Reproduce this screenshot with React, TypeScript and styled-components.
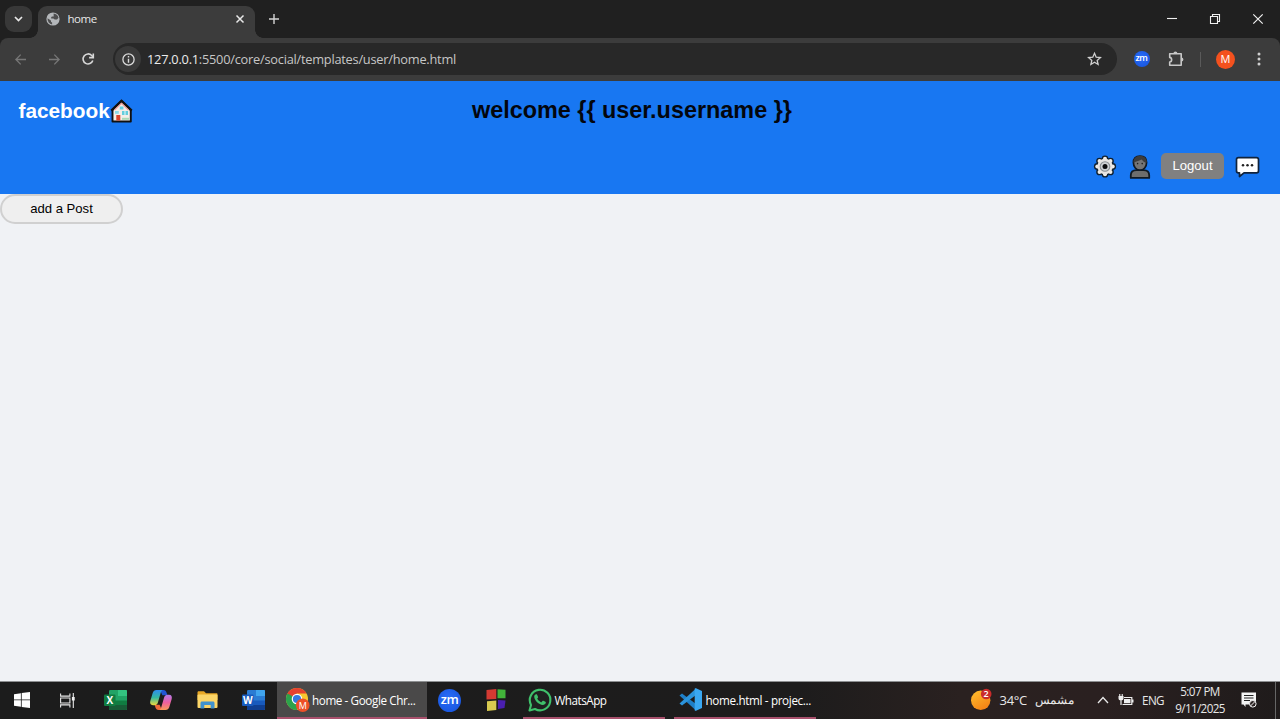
import React from "react";
import styled, { createGlobalStyle } from "styled-components";

const GlobalStyle = createGlobalStyle`
  * { box-sizing: border-box; }
  html, body { margin: 0; padding: 0; }
  body { overflow: hidden; }
  svg { display: block; flex: none; overflow: visible; }
  button { font: inherit; margin: 0; padding: 0; border: 0; background: none; color: inherit; }
`;

const ui = `"Open Sans", "Noto Sans", sans-serif`;
const arial = `"Liberation Sans", Arial, sans-serif`;

const Screen = styled.div`
  width: 1280px;
  height: 719px;
  overflow: hidden;
  display: flex;
  flex-direction: column;
  background: #f0f2f5;
`;

const Text = styled.span<{ $size: number; $spacing?: number; $color?: string }>`
  font-family: ${ui};
  font-size: ${(p) => p.$size}px;
  letter-spacing: ${(p) => p.$spacing ?? 0}px;
  color: ${(p) => p.$color ?? "#e8e8e8"};
  white-space: pre;
  line-height: 16px;
`;

/* Browser frame */
const TabStrip = styled.div`
  height: 38px;
  flex: none;
  background: #202020;
  display: flex;
  align-items: flex-start;
  padding: 6px 1px 0 5px;
`;

const TabSearch = styled.button`
  width: 27px;
  height: 26px;
  border-radius: 9px;
  background: #383838;
  display: grid;
  place-items: center;
  margin-right: 6px;
`;

const Tab = styled.div`
  position: relative;
  width: 217px;
  height: 32px;
  border-radius: 9px 9px 0 0;
  background: #3c3c3c;
  display: flex;
  align-items: center;
  padding: 0 8px 6px 8px;
  &::before, &::after {
    content: "";
    position: absolute;
    bottom: 0;
    width: 8px;
    height: 8px;
  }
  &::before {
    left: -8px;
    background: radial-gradient(circle at 0 0, transparent 7.5px, #3c3c3c 8px);
  }
  &::after {
    right: -8px;
    background: radial-gradient(circle at 100% 0, transparent 7.5px, #3c3c3c 8px);
  }
`;

const TabTitle = styled(Text)`
  flex: 1;
  margin-left: 7.5px;
`;

const Slot = styled.div<{ $w: number }>`
  width: ${(p) => p.$w}px;
  height: 26px;
  flex: none;
  display: grid;
  place-items: center;
`;

const Spacer = styled.div`
  flex: 1;
`;

const ToolbarBack = styled.div`
  flex: none;
  height: 43px;
  background: #202020;
`;

const Toolbar = styled.div`
  height: 43px;
  background: #3c3c3c;
  border-radius: 8px 8px 0 0;
  display: flex;
  align-items: center;
  padding: 0 0 1px 4px;
`;

const Omnibox = styled.div`
  width: 1004px;
  height: 32px;
  flex: none;
  margin-left: 8px;
  border-radius: 16px;
  background: #282828;
  display: flex;
  align-items: center;
  padding: 0 10px 0 2px;
`;

const SiteInfo = styled.div`
  width: 26px;
  height: 26px;
  border-radius: 13px;
  background: #3a3a3a;
  display: grid;
  place-items: center;
  margin-right: 6px;
`;

const Divider = styled.div`
  width: 1.5px;
  height: 15px;
  background: #5a5a5a;
`;

const Avatar = styled.div`
  width: 19px;
  height: 19px;
  border-radius: 50%;
  background: #f4511e;
  display: grid;
  place-items: center;
`;

const ZoomDisc = styled.div<{ $d: number }>`
  width: ${(p) => p.$d}px;
  height: ${(p) => p.$d}px;
  border-radius: 50%;
  background: radial-gradient(circle at 45% 40%, #2a6df8, #1350d8);
  color: #fff;
  font: 600 ${(p) => p.$d * 0.56}px/1 ${ui};
  letter-spacing: -0.4px;
  display: flex;
  align-items: center;
  justify-content: center;
  padding-bottom: ${(p) => p.$d * 0.05}px;
`;

/* Web page */
const Header = styled.header`
  height: 113px;
  flex: none;
  background: #1877f2;
  padding: 14px 20px 0 18px;
  font-family: ${arial};
`;

const HeaderTop = styled.div`
  display: grid;
  grid-template-columns: 454px 1fr;
  height: 57px;
`;

const Brand = styled.div`
  height: 32px;
  display: flex;
  align-items: center;
  padding-left: 0.5px;
  color: #fff;
  font-weight: 700;
  font-size: 20.8px;
`;

const Welcome = styled.h1`
  margin: 0;
  font-size: 23.4px;
  line-height: 30px;
  font-weight: 700;
  color: #03060d;
  white-space: pre;
`;

const Actions = styled.nav`
  display: flex;
  justify-content: flex-end;
  align-items: center;
  height: 28px;
`;

const Logout = styled.button`
  width: 63px;
  height: 26px;
  border-radius: 5px;
  background: #808080;
  color: #fff;
  font: 13.1px ${arial};
  padding-bottom: 1px;
  margin: 0 11px 0 10px;
`;

const Feed = styled.main`
  flex: 1;
`;

const AddPost = styled.button`
  width: 123px;
  height: 29.5px;
  border: 2px solid #d0d0d0;
  border-radius: 15px;
  background: #efefef;
  color: #000;
  font: 13.1px ${arial};
  display: block;
`;

/* Taskbar */
const Taskbar = styled.footer`
  height: 38px;
  flex: none;
  border-top: 1px solid #8d8f91;
  background: linear-gradient(90deg, #1c1c1c 0, #1d1c1c 800px, #2a2120 960px, #2a2020 1100px, #1f1b1b 1280px);
  display: flex;
  align-items: stretch;
`;

const TaskIcon = styled.div<{ $w: number }>`
  width: ${(p) => p.$w}px;
  flex: none;
  display: grid;
  place-items: center;
  padding-bottom: 1px;
`;

const TaskWindow = styled.div<{ $w: number; $active?: boolean; $gap?: number }>`
  width: ${(p) => p.$w}px;
  margin-left: ${(p) => p.$gap ?? 0}px;
  flex: none;
  display: flex;
  align-items: center;
  gap: 2.5px;
  padding-left: ${(p) => (p.$active ? 9 : 5)}px;
  background: ${(p) => (p.$active ? "#4a4949" : "transparent")};
  border-bottom: 2px solid #a8506c;
`;

const Tray = styled.div`
  flex: 1;
  display: flex;
  align-items: center;
  justify-content: flex-end;
  padding-bottom: 1px;
`;

const Temperature = styled(Text)`
  margin: 0 8px 0 8px;
`;

const Clock = styled.div`
  width: 56px;
  display: flex;
  flex-direction: column;
  align-items: center;
  gap: 1px;
  margin: 0 13px 0 8px;
  padding-bottom: 2px;
`;

const ShowDesktop = styled.div`
  width: 5px;
  height: 37px;
  margin-left: 18px;
  border-left: 1px solid #666;
`;

const TrayChevron = styled.svg`
  margin: 0 9px 0 23px;
`;

const Battery = styled.svg`
  margin-right: 8px;
`;

const TabClose = styled.svg`
  margin-right: 3px;
`;

const Star = styled.svg`
  margin-right: 5px;
`;

const GearSlot = styled.div`
  margin-right: 12.5px;
`;

const line = (color: string, w = 1.5) => ({
  fill: "none",
  stroke: color,
  strokeWidth: w,
});

const Globe = () => (
  <svg width="14" height="14" viewBox="0 0 14 14">
    <circle cx="7" cy="7" r="6.6" fill="#b4b7ba" />
    <path d="M1.5 6.2l3.4 2.2.2 1.6 1 .6v2C3.4 12 1.4 9.6 1.5 6.2zM7.6 1.5c2.5.2 4.3 1.8 4.9 4.2L11 7.6H8.7L7.4 6.4H5.2V5l1-.6h1.5z" fill="#3c3c3c" opacity=".85" />
  </svg>
);

const House = () => (
  <svg width="23" height="24" viewBox="0 0 23 24">
    <path d="M11.5 2L20.8 11V22.5H2.5V11z" fill="#f3eee9" stroke="#101010" strokeWidth="1.9" strokeLinejoin="round" />
    <path d="M1.3 11.7L11.5 1.8l10.2 9.9" {...line("#111", 2.3)} />
    <path d="M4.5 11L11.5 4.3l7 6.7" {...line("#ef9d97", 1.1)} />
    <rect x="9.8" y="7.5" width="3.6" height="3" fill="#68d0df" />
    <rect x="5" y="12" width="3.8" height="2.8" fill="#8adbe6" />
    <rect x="12" y="12" width="6" height="4" fill="#63cddd" />
    <path d="M15 12v4" {...line("#eaf7f9", 1)} />
    <rect x="6.3" y="16" width="4" height="5.5" fill="#d8442c" />
    <path d="M12 19.8h7" {...line("#a9d8b5", 2)} />
  </svg>
);

const gearTeeth = Array.from({ length: 8 }, (_, i) => {
  const a = (i * Math.PI) / 4;
  return { x: 12 + 7.7 * Math.cos(a), y: 12.5 + 7.7 * Math.sin(a) };
});

const Gear = () => (
  <svg width="24" height="24" viewBox="0 0 24 24">
    {gearTeeth.map((t, i) => <circle key={i} cx={t.x} cy={t.y} r="3.4" fill="#10202f" />)}
    {gearTeeth.map((t, i) => <circle key={i} cx={t.x} cy={t.y} r="2" fill="#efece8" />)}
    <circle cx="12" cy="12.5" r="7.7" fill="#e9e6e3" />
    <circle cx="12" cy="12.5" r="4.8" fill="#d0d2d4" stroke="#8c9093" strokeWidth="1.1" />
    <circle cx="12" cy="12.5" r="2.5" fill="#0c0c0c" />
  </svg>
);

const Person = () => (
  <svg width="22" height="25" viewBox="0 0 22 25">
    <path d="M1.8 23.9v-2.6c0-3.5 2.2-5.200 5.700-5.200h7c3.500 0 5.700 1.700 5.700 5.200v2.600z" fill="#6d6d6d" stroke="#111a24" strokeWidth="1.8" strokeLinejoin="round" />
    <path d="M11 2c4.500 0 6.600 2.800 6.600 6.600 0 4.200-2.800 7.600-6.600 7.600s-6.600-3.400-6.600-7.600C4.400 4.800 6.500 2 11 2z" fill="#747474" stroke="#111a24" strokeWidth="1.7" />
    <path d="M4.5 8.800C4 4.800 7 1.800 11 1.800s7 2.500 6.800 7c-2.300 0-4-1.800-5.300-3.200-1.800 1.200-5 2-8 3.200z" fill="#3c3c3c" />
    <circle cx="8.6" cy="9.600" r=".8" fill="#222" />
    <circle cx="13.2" cy="9.600" r=".8" fill="#222" />
  </svg>
);

const Chat = () => (
  <svg width="25" height="22" viewBox="0 0 25 22">
    <path d="M3.5 2.7h18c1.200 0 2 .8 2 1.800V16c0 1-.8 1.800-2 1.800H9L4.500 21.500v-3.700h-1c-1.200 0-2-.8-2-1.800V4.500c0-1 .8-1.800 2-1.800z" fill="#fff" stroke="#10233c" strokeWidth="1.7" strokeLinejoin="round" />
    {[8, 12.5, 17].map((x) => <circle key={x} cx={x} cy="10.200" r="1.250" fill="#222" />)}
  </svg>
);

const OfficeIcon = ({ letter, tones }: { letter: string; tones: string[] }) => (
  <svg width="23" height="21" viewBox="0 0 23 21">
    <rect x="5" y="0" width="18" height="20" rx="1.3" fill={tones[1]} />
    <path d="M14 0h7.7A1.3 1.3 0 0 1 23 1.3V6h-9z" fill={tones[0]} />
    <path d="M5 10.5h18V15H5z" fill={tones[2]} />
    <path d="M5 15h18v3.7a1.3 1.3 0 0 1-1.3 1.3H6.3A1.3 1.3 0 0 1 5 18.700z" fill={tones[3]} />
    <rect x="0" y="4.5" width="11.5" height="11.5" rx="1" fill={tones[4]} />
    <text x="5.75" y="13.8" textAnchor="middle" fontFamily="Open Sans, sans-serif" fontWeight="700" fontSize="10" fill="#fff">{letter}</text>
  </svg>
);

const Copilot = () => (
  <svg width="22" height="20" viewBox="0 0 22 20">
    <defs>
      <linearGradient id="cpA" x1="0" y1="0" x2="0" y2="1">
        <stop offset="0" stopColor="#2d8cf0" />
        <stop offset=".5" stopColor="#34b8a0" />
        <stop offset="1" stopColor="#f0d93c" />
      </linearGradient>
      <linearGradient id="cpB" x1="0" y1="0" x2="0" y2="1">
        <stop offset="0" stopColor="#b57bea" />
        <stop offset=".5" stopColor="#ec5f9f" />
        <stop offset="1" stopColor="#f79a57" />
      </linearGradient>
    </defs>
    <path d="M10 0h3.5c1.7 0 2.5 1 3 2.5l.9 2.8h-5z" fill="#2356d4" />
    <path d="M12 20H8.5c-1.7 0-2.5-1-3-2.5l-.9-2.8h5z" fill="#ee6a3a" />
    <path d="M6.5 0h6.2c-1 .5-1.5 1.3-1.9 2.5L7.9 12.5c-.6 1.900-1.700 2.700-3.400 2.700H3c-2.500 0-3.300-2-2.700-4.200l2.400-8C3.300 1 4.500 0 6.500 0z" fill="url(#cpA)" />
    <path d="M15.500 20H9.300c1-.5 1.500-1.300 1.900-2.500l2.900-10c.6-1.900 1.700-2.700 3.400-2.700H19c2.500 0 3.300 2 2.700 4.200l-2.400 8c-.6 2-1.800 3-3.800 3z" fill="url(#cpB)" />
  </svg>
);

const Folder = () => (
  <svg width="21" height="18" viewBox="0 0 21 18">
    <path d="M.5 1.5C.5.7 1 .3 1.7.3H7l2 2h10.500c.6 0 1 .4 1 1V9H.5z" fill="#e9a825" />
    <rect x=".5" y="3.5" width="20" height="13.5" rx="1" fill="#fbd568" />
    <path d="M3.500 17.500V12c0-1 .6-1.600 1.600-1.600h10.800c1 0 1.600.6 1.600 1.600v5.500h-3.800V14H7.300v3.500z" fill="#3f92cf" />
  </svg>
);

const Chrome = () => (
  <svg width="24" height="24" viewBox="0 0 24 24">
    <circle cx="11" cy="11" r="11" fill="#f9c62f" />
    <path d="M1.47 5.5A11 11 0 0 0 11 22L15.5 13.5L11 11z" fill="#2ba24c" />
    <path d="M1.47 5.5A11 11 0 0 1 20.53 5.5H11z" fill="#e5412f" />
    <path d="M1.47 5.5L6 13l5-2V5.5z" fill="#2ba24c" />
    <path d="M1.47 5.5A11 11 0 0 1 4 2.5L11 5.500l-4 3z" fill="#e5412f" />
    <circle cx="11" cy="11" r="5.3" fill="#fff" />
    <circle cx="11" cy="11" r="4.1" fill="#3478e0" />
    <circle cx="16.7" cy="17.2" r="6.8" fill="#ee4f27" />
    <text x="16.7" y="20.6" textAnchor="middle" fontFamily="Open Sans, sans-serif" fontSize="9" fill="#fff">M</text>
  </svg>
);

const Cubes = () => (
  <svg width="20" height="22" viewBox="0 0 20 22">
    <path d="M.5 1l9.8-1v10l-9.8.5z" fill="#d43a32" />
    <path d="M11.5.3l8 .5v8.500h-8z" fill="#42b43a" />
    <path d="M1 12.300l9.300-.8V21L1 22z" fill="#d9cb50" />
    <path d="M12 11l7.500.5-1 7.500-6.500 1z" fill="#4a1fb0" />
  </svg>
);

const WhatsApp = () => (
  <svg width="24" height="24" viewBox="0 0 24 24">
    <path d="M1.5 22.5l1.5-5.6A10.3 10.3 0 1 1 7 21z" fill="#1f2220" stroke="#3fc16b" strokeWidth="2.1" strokeLinejoin="round" />
    <path d="M8.3 6.3c.4 0 .7.1.9.6l.9 2c.1.400 0 .7-.9 1.700.8 1.700 2.200 3 4 3.800l1.300-1.500c.3-.3.500-.3.900-.1l2 1c.5.200.5.500.4 1-.3 1.300-1.600 2.200-3 2.200-4-.3-8.300-4.500-8.600-8.200 0-1.200.9-2.500 2.100-2.500z" fill="#3fc16b" />
  </svg>
);

const VSCode = () => (
  <svg width="24" height="23" viewBox="0 0 24 23">
    <path d="M.5 7.4l2.5-2L17 16v6.5z" fill="#1e7fc8" />
    <path d="M.5 15.6l2.5 2L17 7V.5z" fill="#2b94dc" />
    <path d="M17 .3l6 2.7v17l-6 2.7c-1 .2-1.3-.5-1.3-.5V.8s.3-.7 1.300-.5z" fill="#3aa8f2" />
  </svg>
);

const Weather = () => (
  <svg width="21" height="22" viewBox="0 0 21 22">
    <defs>
      <linearGradient id="sun" x1="0" y1="0" x2=".6" y2="1">
        <stop offset="0" stopColor="#ffc02e" />
        <stop offset="1" stopColor="#f58416" />
      </linearGradient>
    </defs>
    <circle cx="9.7" cy="11.3" r="9.7" fill="url(#sun)" />
    <circle cx="15.2" cy="5" r="5.3" fill="#c92b2b" />
    <text x="15.2" y="8.2" textAnchor="middle" fontFamily="Open Sans, sans-serif" fontWeight="600" fontSize="9" fill="#fff">2</text>
  </svg>
);

export default function App() {
  return (
    <Screen>
      <GlobalStyle />
      <TabStrip>
        <TabSearch>
          <svg width="9" height="6" viewBox="0 0 9 6"><path d="M1 1l3.5 3.5L8 1" {...line("#e8e8e8", 1.7)} /></svg>
        </TabSearch>
        <Tab>
          <Globe />
          <TabTitle $size={11.5} $spacing={-0.45}>home</TabTitle>
          <TabClose width="8" height="8" viewBox="0 0 8 8"><path d="M.5.5l7 7M7.5.5l-7 7" {...line("#e8e8e8", 1.5)} /></TabClose>
        </Tab>
        <Slot $w={37}>
          <svg width="10" height="10" viewBox="0 0 10 10"><path d="M5 0v10M0 5h10" {...line("#d4d4d4", 1.4)} /></svg>
        </Slot>
        <Spacer />
        <Slot $w={43}>
          <svg width="10" height="2" viewBox="0 0 10 2"><path d="M0 .5h10" {...line("#f0f0f0", 1.1)} /></svg>
        </Slot>
        <Slot $w={43}>
          <svg width="10" height="10" viewBox="0 0 10 10"><path d="M.5 2.5h7v7h-7zM2.5 2.5v-2h7v7h-2" {...line("#f0f0f0", 1.1)} /></svg>
        </Slot>
        <Slot $w={43}>
          <svg width="10" height="10" viewBox="0 0 10 10"><path d="M.3.3l9.400 9.400M9.700.3L.3 9.700" {...line("#f0f0f0", 1.2)} /></svg>
        </Slot>
      </TabStrip>
      <ToolbarBack>
        <Toolbar>
          <Slot $w={33}>
            <svg width="11" height="11" viewBox="0 0 11 11"><path d="M11 5.5H1M5.7.6L.9 5.500l4.800 4.900" {...line("#777", 1.3)} /></svg>
          </Slot>
          <Slot $w={34}>
            <svg width="11" height="11" viewBox="0 0 11 11"><path d="M0 5.5h10M5.3.6l4.800 4.900-4.800 4.900" {...line("#777", 1.3)} /></svg>
          </Slot>
          <Slot $w={34}>
            <svg width="12" height="12" viewBox="0 0 12 12">
              <path d="M10.8 7.500A5 5 0 1 1 9.700 2.500L11 3.900" {...line("#d8d8d8", 1.6)} />
              <path d="M11.3.4v4.200H7.100" {...line("#d8d8d8", 1.6)} />
            </svg>
          </Slot>
          <Omnibox>
            <SiteInfo>
              <svg width="13" height="13" viewBox="0 0 13 13">
                <circle cx="6.5" cy="6.5" r="5.6" {...line("#dcdcdc", 1.3)} />
                <path d="M6.5 5.700v4M6.500 3.100v1.500" {...line("#dcdcdc", 1.4)} />
              </svg>
            </SiteInfo>
            <Text $size={12.8} $spacing={-0.24} $color="#ececec">127.0.0.1</Text>
            <Text $size={12.8} $spacing={-0.24} $color="#c6c6c6">:5500/core/social/templates/user/home.html</Text>
            <Spacer />
            <Star width="15" height="14" viewBox="0 0 15 14">
              <path d="M7.5 1.300l1.700 3.900 4.200.4-3.200 2.800.9 4.100-3.600-2.200-3.600 2.200.9-4.100L1.600 5.600l4.200-.4z" {...line("#d0d0d0", 1.3)} />
            </Star>
          </Omnibox>
          <Slot $w={49}><ZoomDisc $d={16}>zm</ZoomDisc></Slot>
          <Slot $w={19}>
            <svg width="16" height="16" viewBox="0 0 16 16">
              <path d="M1.7 2.8h11.500v11.500H1.700v-3.200c2.600-.4 2.600-4.300 0-4.700z" {...line("#c8c8c8", 1.6)} strokeLinejoin="round" />
              <path d="M5.4 2.500a2 2 0 0 1 4 0zM13.400 6.500a2 2 0 0 1 0 4z" fill="#c8c8c8" />
            </svg>
          </Slot>
          <Slot $w={31}><Divider /></Slot>
          <Slot $w={19}>
            <Avatar><Text $size={11} $color="#fff">M</Text></Avatar>
          </Slot>
          <Slot $w={48}>
            <svg width="4" height="14" viewBox="0 0 4 14">
              {[2, 7, 12].map((y) => <circle key={y} cx="2" cy={y} r="1.5" fill="#d0d0d0" />)}
            </svg>
          </Slot>
        </Toolbar>
      </ToolbarBack>

      <Header>
        <HeaderTop>
          <Brand>facebook<House /></Brand>
          <Welcome>{"welcome {{ user.username }}"}</Welcome>
        </HeaderTop>
        <Actions>
          <GearSlot><Gear /></GearSlot>
          <Person />
          <Logout>Logout</Logout>
          <Chat />
        </Actions>
      </Header>
      <Feed>
        <AddPost>add a Post</AddPost>
      </Feed>

      <Taskbar>
        <TaskIcon $w={44}>
          <svg width="16" height="16" viewBox="0 0 16 16">
            <path d="M0 2.2L6.9 1.2v6.300H0zM7.700 1.100L16 0v7.500H7.700zM0 8.300h6.900v6.400L0 13.700zM7.700 8.300H16V16l-8.300-1.100z" fill="#fff" />
          </svg>
        </TaskIcon>
        <TaskIcon $w={46}>
          <svg width="15" height="15" viewBox="0 0 15 15">
            <path d="M.6.5v2.600h9.300V.5M.6 14.500v-2.600h9.300v2.600M.6 5h9.300v5H.6zM13.300 0v15" {...line("#e8e8e8", 1.1)} />
            <rect x="11.9" y="4" width="2.8" height="3.5" fill="#f0f0f0" />
          </svg>
        </TaskIcon>
        <TaskIcon $w={50}><OfficeIcon letter="X" tones={["#33c481", "#21a366", "#107c41", "#185c37", "#107c41"]} /></TaskIcon>
        <TaskIcon $w={42}><Copilot /></TaskIcon>
        <TaskIcon $w={50}><Folder /></TaskIcon>
        <TaskIcon $w={42}><OfficeIcon letter="W" tones={["#41a5ee", "#2b7cd3", "#185abd", "#103f91", "#185abd"]} /></TaskIcon>
        <TaskWindow $w={150} $active $gap={2.5}>
          <Chrome />
          <Text $size={11.7} $spacing={-0.4} $color="#fff">home - Google Chr...</Text>
        </TaskWindow>
        <TaskIcon $w={46}><ZoomDisc $d={23}>zm</ZoomDisc></TaskIcon>
        <TaskIcon $w={46}><Cubes /></TaskIcon>
        <TaskWindow $w={142} $gap={4.5}>
          <WhatsApp />
          <Text $size={11.7} $spacing={-0.48} $color="#fff">WhatsApp</Text>
        </TaskWindow>
        <TaskWindow $w={142} $gap={9}>
          <VSCode />
          <Text $size={11.7} $spacing={-0.35} $color="#fff">home.html - projec...</Text>
        </TaskWindow>
        <Tray>
          <Weather />
          <Temperature $size={13} $spacing={-0.3}>34°C</Temperature>
          <Text $size={12.3} dir="rtl">مشمس</Text>
          <TrayChevron width="12" height="8" viewBox="0 0 12 8"><path d="M1 7l5-5.500L11 7" {...line("#e8e8e8", 1.3)} /></TrayChevron>
          <Battery width="16" height="12" viewBox="0 0 16 12">
            <path d="M4.5 10.500h9.300v-7H6" {...line("#eee", 1.2)} />
            <rect x="6" y="5" width="6.5" height="4.2" fill="#eee" />
            <path d="M14 5.500h1.500v3H14zM.5 2h5v2.500c0 1.200-1 2-2.500 2s-2.500-.8-2.500-2zM1.200 0h1.100v2H1.200zM3.700 0h1.100v2H3.700zM2.400 6h1.200v5H2.400z" fill="#eee" />
          </Battery>
          <Text $size={11.7} $spacing={-0.6}>ENG</Text>
          <Clock>
            <Text $size={11.7} $spacing={-0.6}>5:07 PM</Text>
            <Text $size={11.7} $spacing={-0.65}>9/11/2025</Text>
          </Clock>
          <svg width="16" height="16" viewBox="0 0 16 16">
            <path d="M.5.5h14.500v9h-3l-2.500 3H4.500v2.500L2.500 12.500h-2z" fill="#f4f4f4" />
            <path d="M3 3.500h9.500M3 6h9.500M3 8.500h6" {...line("#222", 1)} />
            <circle cx="11.8" cy="11.8" r="3.3" fill="#2a2222" stroke="#f4f4f4" />
            <path d="M9.5 14l4.500-4.500" {...line("#f4f4f4", 1)} />
          </svg>
          <ShowDesktop />
        </Tray>
      </Taskbar>
    </Screen>
  );
}
